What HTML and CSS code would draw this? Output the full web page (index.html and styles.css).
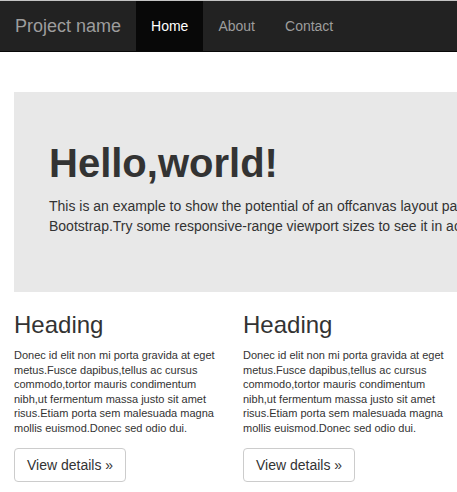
FILE: index.html
```html
<!DOCTYPE html>
<html lang="en">
<head>
<meta charset="utf-8">
<title>Off Canvas Template</title>
<link rel="stylesheet" href="styles.css">
</head>
<body>
<header class="navbar">
  <a class="brand" href="#">Project name</a>
  <ul class="nav">
    <li class="active"><a href="#">Home</a></li>
    <li><a href="#">About</a></li>
    <li><a href="#">Contact</a></li>
  </ul>
</header>
<main class="page">
  <section class="jumbotron">
    <h1>Hello,world!</h1>
    <p>This is an example to show the potential of an offcanvas layout pattern in<br>Bootstrap.Try some responsive-range viewport sizes to see it in action.</p>
  </section>
  <div class="row">
    <div class="col">
      <h2>Heading</h2>
      <p>Donec id elit non mi porta gravida at eget metus.Fusce dapibus,tellus ac cursus commodo,tortor mauris condimentum nibh,ut fermentum massa justo sit amet risus.Etiam porta sem malesuada magna mollis euismod.Donec sed odio dui.</p>
      <a class="btn" href="#">View details &raquo;</a>
    </div>
    <div class="col">
      <h2>Heading</h2>
      <p>Donec id elit non mi porta gravida at eget metus.Fusce dapibus,tellus ac cursus commodo,tortor mauris condimentum nibh,ut fermentum massa justo sit amet risus.Etiam porta sem malesuada magna mollis euismod.Donec sed odio dui.</p>
      <a class="btn" href="#">View details &raquo;</a>
    </div>
  </div>
</main>
</body>
</html>
```
FILE: styles.css
```css
html, body {
  margin: 0;
  padding: 0;
  background: #fff;
  overflow-x: hidden;
}
body {
  font-family: "Liberation Sans", Arial, sans-serif;
  font-size: 14px;
  line-height: 20px;
  color: #333;
}
a { text-decoration: none; }

.navbar {
  display: flex;
  align-items: stretch;
  height: 50px;
  background: #222;
  border-top: 1px solid #c4c4c4;
  border-bottom: 1px solid #080808;
}
.brand {
  padding: 15px;
  font-size: 18px;
  line-height: 20px;
  color: #9d9d9d;
}
.nav {
  display: flex;
  list-style: none;
  margin: 0;
  padding: 0;
}
.nav a {
  display: block;
  padding: 15px;
  line-height: 20px;
  color: #9d9d9d;
}
.nav .active a {
  background: #080808;
  color: #fff;
}

.page {
  overflow: hidden;
  padding: 40px 0 30px 14px;
}
.jumbotron {
  width: 800px;
  box-sizing: border-box;
  background: #e8e8e8;
  padding: 29px 35px 41px;
}
.jumbotron h1 {
  margin: 20px 0 11px;
  font-size: 40px;
  line-height: 44px;
  font-weight: bold;
}
.jumbotron p {
  margin: 0 0 15px;
  font-size: 14px;
  line-height: 20px;
  white-space: nowrap;
}

.row {
  display: grid;
  grid-template-columns: 210px 210px;
  column-gap: 19px;
}
.col h2 {
  margin: 20px 0 10px;
  font-size: 24px;
  line-height: 26px;
  font-weight: normal;
}
.col p {
  margin: 0 0 13px;
  font-size: 11px;
  line-height: 14.5px;
}
.btn {
  display: inline-block;
  padding: 6px 12px;
  font-size: 14px;
  line-height: 20px;
  color: #333;
  background: #fff;
  border: 1px solid #ccc;
  border-radius: 4px;
}
```
